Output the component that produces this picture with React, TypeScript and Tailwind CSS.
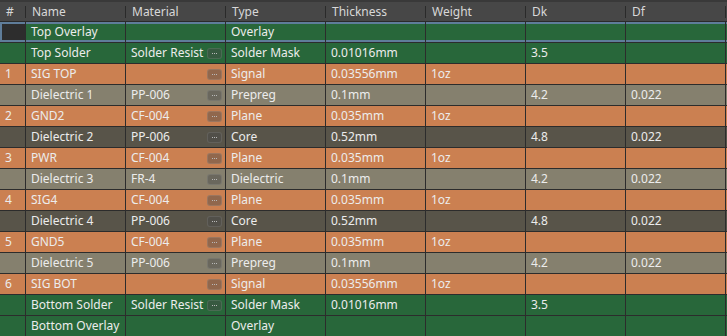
import React from 'react';

type Kind = 'green' | 'copper' | 'prepreg' | 'core';

type Layer = {
  num: string;
  name: string;
  material: string;
  type: string;
  thickness: string;
  weight: string;
  dk: string;
  df: string;
  kind: Kind;
  btn: boolean;
  selected?: boolean;
};

const layers: Layer[] = [
  { num: '', name: 'Top Overlay', material: '', type: 'Overlay', thickness: '', weight: '', dk: '', df: '', kind: 'green', btn: false, selected: true },
  { num: '', name: 'Top Solder', material: 'Solder Resist', type: 'Solder Mask', thickness: '0.01016mm', weight: '', dk: '3.5', df: '', kind: 'green', btn: true },
  { num: '1', name: 'SIG TOP', material: '', type: 'Signal', thickness: '0.03556mm', weight: '1oz', dk: '', df: '', kind: 'copper', btn: true },
  { num: '', name: 'Dielectric 1', material: 'PP-006', type: 'Prepreg', thickness: '0.1mm', weight: '', dk: '4.2', df: '0.022', kind: 'prepreg', btn: true },
  { num: '2', name: 'GND2', material: 'CF-004', type: 'Plane', thickness: '0.035mm', weight: '1oz', dk: '', df: '', kind: 'copper', btn: true },
  { num: '', name: 'Dielectric 2', material: 'PP-006', type: 'Core', thickness: '0.52mm', weight: '', dk: '4.8', df: '0.022', kind: 'core', btn: true },
  { num: '3', name: 'PWR', material: 'CF-004', type: 'Plane', thickness: '0.035mm', weight: '1oz', dk: '', df: '', kind: 'copper', btn: true },
  { num: '', name: 'Dielectric 3', material: 'FR-4', type: 'Dielectric', thickness: '0.1mm', weight: '', dk: '4.2', df: '0.022', kind: 'prepreg', btn: true },
  { num: '4', name: 'SIG4', material: 'CF-004', type: 'Plane', thickness: '0.035mm', weight: '1oz', dk: '', df: '', kind: 'copper', btn: true },
  { num: '', name: 'Dielectric 4', material: 'PP-006', type: 'Core', thickness: '0.52mm', weight: '', dk: '4.8', df: '0.022', kind: 'core', btn: true },
  { num: '5', name: 'GND5', material: 'CF-004', type: 'Plane', thickness: '0.035mm', weight: '1oz', dk: '', df: '', kind: 'copper', btn: true },
  { num: '', name: 'Dielectric 5', material: 'PP-006', type: 'Prepreg', thickness: '0.1mm', weight: '', dk: '4.2', df: '0.022', kind: 'prepreg', btn: true },
  { num: '6', name: 'SIG BOT', material: '', type: 'Signal', thickness: '0.03556mm', weight: '1oz', dk: '', df: '', kind: 'copper', btn: true },
  { num: '', name: 'Bottom Solder', material: 'Solder Resist', type: 'Solder Mask', thickness: '0.01016mm', weight: '', dk: '3.5', df: '', kind: 'green', btn: true },
  { num: '', name: 'Bottom Overlay', material: '', type: 'Overlay', thickness: '', weight: '', dk: '', df: '', kind: 'green', btn: false },
];

const rowBg: Record<Kind, string> = {
  green: 'bg-[#28673a]',
  copper: 'bg-[#cb8051]',
  prepreg: 'bg-[#85806e]',
  core: 'bg-[#585449]',
};

const cols = 'grid grid-cols-[26px_100px_100px_100px_100px_100px_100px_100px_1fr]';

const headers = ['#', 'Name', 'Material', 'Type', 'Thickness', 'Weight', 'Dk', 'Df', ''];

const MoreButton = () => (
  <span className="ml-auto mr-[3px] flex h-[11px] w-[15px] items-center justify-center gap-[1px] rounded-[3px] border border-[#ffffff1a] bg-[#4a4a4a73]">
    <span className="h-[1px] w-[1px] bg-[#b8b8b8]" />
    <span className="h-[1px] w-[1px] bg-[#b8b8b8]" />
    <span className="h-[1px] w-[1px] bg-[#b8b8b8]" />
  </span>
);

const Cell = ({ children, className = '' }: { children?: React.ReactNode; className?: string }) => (
  <div className={`flex items-center overflow-hidden whitespace-nowrap border-r border-[#2c2c2c] pl-[5px] ${className}`}>
    {children}
  </div>
);

const App = () => {
  return (
    <div className="h-[336px] w-[727px] overflow-hidden bg-[#2c2c2c] text-[12px] text-[#ececec] [font-family:'Noto_Sans',sans-serif]">
      {/* header */}
      <div className={`${cols} h-[22px] border-t-2 border-[#393939] border-b border-b-[#2a2a2a] bg-[#474747] text-[#d8d8d8]`}>
        {headers.map((h, i) => (
          <div key={i} className="flex items-center">
            <span className="pl-[6px]">{h}</span>
            {i < 8 && <span className="ml-auto h-[12px] w-[1px] bg-[#2a2a2a]" />}
          </div>
        ))}
      </div>

      {layers.map((l, idx) => (
        <div
          key={idx}
          className={`${cols} h-[21px] border-b border-[#2c2c2c] ${rowBg[l.kind]} ${
            l.selected ? 'shadow-[inset_0_2px_0_#5f7d9a,inset_0_-2px_0_#5f7d9a]' : ''
          }`}
        >
          <Cell
            className={
              l.selected
                ? 'bg-[#2d2d2d] shadow-[inset_2px_0_0_#5f7d9a,inset_0_2px_0_#5f7d9a,inset_0_-2px_0_#5f7d9a]'
                : ''
            }
          >
            {l.num}
          </Cell>
          <Cell>{l.name}</Cell>
          <Cell>
            {l.material}
            {l.btn && <MoreButton />}
          </Cell>
          <Cell className="pl-[4px]">{l.type}</Cell>
          <Cell>{l.thickness}</Cell>
          <Cell>{l.weight}</Cell>
          <Cell>{l.dk}</Cell>
          <Cell>{l.df}</Cell>
          <div />
        </div>
      ))}
    </div>
  );
};

export default App;
